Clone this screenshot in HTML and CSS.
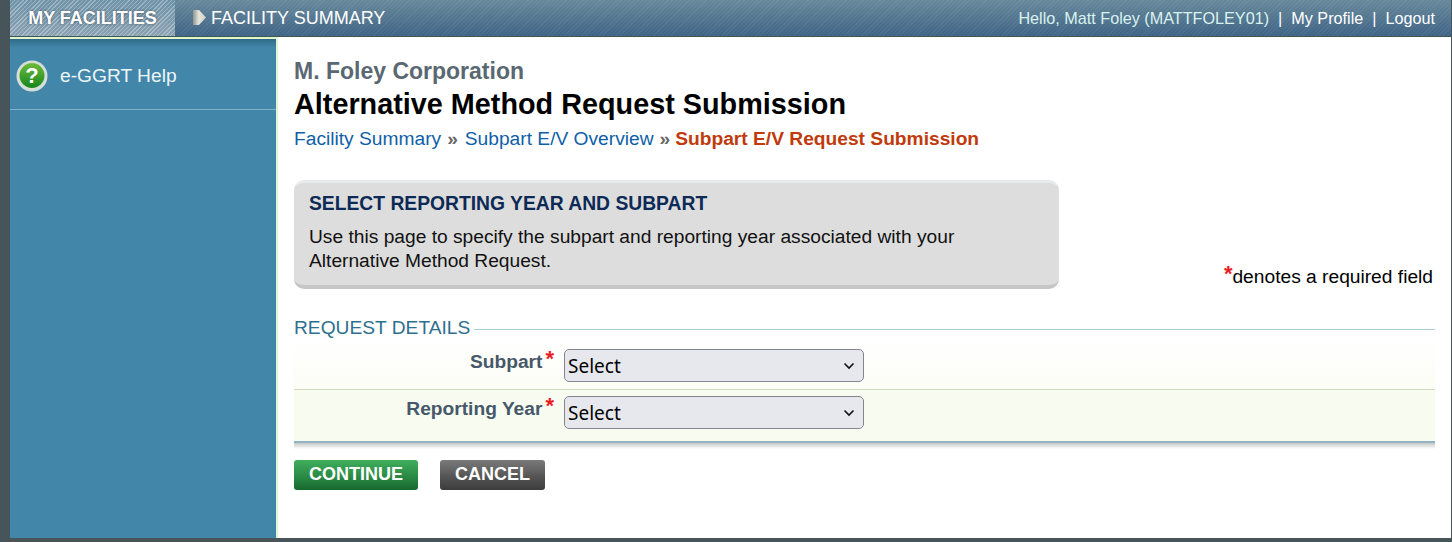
FILE: index.html
```html
<!DOCTYPE html>
<html lang="en">
<head>
<meta charset="UTF-8">
<meta name="viewport" content="width=device-width, initial-scale=1.0">
<title>Alternative Method Request Submission</title>
<link rel="stylesheet" href="styles.css">
</head>
<body>

<div class="wrapper">
    <div class="topbar">
        <a class="tab-active" href="#">MY FACILITIES</a>
        <a class="tab" href="#">
            <svg class="tab-arrow" width="13" height="15" viewBox="0 0 13 15">
                <defs>
                    <linearGradient id="arrowFill" x1="0" y1="0" x2="1" y2="0">
                        <stop offset="0" stop-color="#8f9490"/>
                        <stop offset="0.45" stop-color="#e6e6dc"/>
                        <stop offset="1" stop-color="#cfd0c8"/>
                    </linearGradient>
                </defs>
                <path d="M0 0 L6 0 L13 7.5 L6 15 L0 15 Z" fill="url(#arrowFill)"/>
            </svg>
            FACILITY SUMMARY
        </a>
        <div class="user-links">
            <span class="hello">Hello, Matt Foley (MATTFOLEY01)</span>
            <span class="sep">|</span>
            <a href="#">My Profile</a>
            <span class="sep">|</span>
            <a href="#">Logout</a>
        </div>
    </div>

    <div class="columns">
        <div class="sidebar">
            <a class="help-link" href="#">
                <svg class="help-icon" width="32" height="32" viewBox="0 0 32 32">
                    <defs>
                        <linearGradient id="helpGreen" x1="0" y1="0" x2="0" y2="1">
                            <stop offset="0" stop-color="#6dbb3c"/>
                            <stop offset="1" stop-color="#17851d"/>
                        </linearGradient>
                    </defs>
                    <circle cx="16" cy="16" r="15.5" fill="#d5dfd8"/>
                    <circle cx="16" cy="15.5" r="12.5" fill="url(#helpGreen)"/>
                    <text x="16" y="23" text-anchor="middle" class="help-mark">?</text>
                </svg>
                e-GGRT Help
            </a>
        </div>

        <div class="content">
            <div class="org-name">M. Foley Corporation</div>
            <h1>Alternative Method Request Submission</h1>
            <div class="crumbs">
                <a href="#">Facility Summary</a>
                <span class="crumb-sep">»</span>
                <a href="#">Subpart E/V Overview</a>
                <span class="crumb-sep">»</span>
                <span class="crumb-current">Subpart E/V Request Submission</span>
            </div>

            <div class="info-row">
                <div class="info-box">
                    <h2>SELECT REPORTING YEAR AND SUBPART</h2>
                    <p>Use this page to specify the subpart and reporting year associated with your Alternative Method Request.</p>
                </div>
                <div class="required-note"><span class="star">*</span>denotes a required field</div>
            </div>

            <div class="section-title">
                <span>REQUEST DETAILS</span>
                <div class="section-line"></div>
            </div>

            <div class="form-rows">
                <div class="form-row">
                    <label>Subpart<span class="star">*</span></label>
                    <div class="select-wrap">
                        <select><option>Select</option></select>
                        <svg class="chevron" width="12" height="8" viewBox="0 0 12 8"><path d="M1.5 1.5 L6 6 L10.5 1.5" fill="none" stroke="#111" stroke-width="1.6"/></svg>
                    </div>
                </div>
                <div class="form-row alt">
                    <label>Reporting Year<span class="star">*</span></label>
                    <div class="select-wrap">
                        <select><option>Select</option></select>
                        <svg class="chevron" width="12" height="8" viewBox="0 0 12 8"><path d="M1.5 1.5 L6 6 L10.5 1.5" fill="none" stroke="#111" stroke-width="1.6"/></svg>
                    </div>
                </div>
            </div>
            <div class="form-shadow"></div>

            <div class="buttons">
                <button class="btn btn-green">CONTINUE</button>
                <button class="btn btn-grey">CANCEL</button>
            </div>
        </div>
    </div>
</div>

</body>
</html>
```

FILE: styles.css
```css
html, body {
    height: 100%;
}

body {
    font-family: "Liberation Sans", Arial, sans-serif;
    margin: 0;
    padding: 0;
    background-color: #47545a;
    color: #000;
    overflow: hidden;
}

a {
    text-decoration: none;
}

.wrapper {
    display: flex;
    flex-direction: column;
    height: 538px;
    margin-left: 10px;
    margin-right: 1px;
}

/* top bar */
.topbar {
    display: flex;
    align-items: stretch;
    height: 37px;
    flex: none;
    box-sizing: border-box;
    border-bottom: 1px solid #3c5a50;
    background-color: #3f6486;
    background-image:
        repeating-linear-gradient(135deg, rgba(255,255,255,0.05) 0, rgba(255,255,255,0.05) 1px, transparent 1px, transparent 3px),
        linear-gradient(to bottom, #68899b 0%, #3f6486 100%);
}

.tab-active {
    display: flex;
    align-items: center;
    justify-content: center;
    width: 165px;
    font-size: 18px;
    font-weight: bold;
    color: #fff;
    text-shadow: 0 0 3px rgba(50,70,90,0.9);
    background-color: #8fa5b2;
    background-image:
        repeating-linear-gradient(135deg, rgba(255,255,255,0.3) 0, rgba(255,255,255,0.3) 1px, transparent 1px, transparent 3px),
        linear-gradient(to bottom, #6f93a8 0%, #8aa2b2 100%);
}

.tab {
    display: flex;
    align-items: center;
    margin-left: 18px;
    font-size: 18px;
    color: #fff;
}

.tab-arrow {
    margin-right: 5px;
    margin-top: -2px;
}

.user-links {
    display: flex;
    align-items: center;
    margin-left: auto;
    padding-right: 16px;
    font-size: 16.2px;
    color: #fff;
}

.user-links a {
    color: #fff;
}

.hello {
    color: #d9f2ee;
}

.sep {
    margin: 0 9px;
}

/* left panel + main area */
.columns {
    display: flex;
    flex: 1;
    min-height: 0;
}

.sidebar {
    width: 266px;
    flex: none;
    background: #4287aa;
    border-right: 2px solid #e2f3cf;
    border-top: 2px solid #e2f3cf;
}

.help-link {
    display: flex;
    align-items: center;
    height: 71px;
    box-sizing: border-box;
    padding-left: 6px;
    padding-top: 3px;
    font-size: 19.2px;
    color: #eef6f8;
    border-bottom: 1px solid #7db0c9;
    background: linear-gradient(to bottom, #2f6a87 0, #4287aa 9px);
}

.help-icon {
    margin-right: 12px;
}

.help-mark {
    font-family: "Liberation Sans", Arial, sans-serif;
    font-size: 22px;
    font-weight: bold;
    fill: #fff;
}

.content {
    flex: 1;
    min-width: 0;
    background: #fff;
    padding: 21px 16px 0 16px;
}

.org-name {
    font-size: 23px;
    font-weight: bold;
    line-height: 26px;
    color: #5a6872;
}

h1 {
    margin: 4px 0 0 0;
    font-size: 28.8px;
    line-height: 33px;
    font-weight: bold;
    color: #000;
}

.crumbs {
    margin-top: 7px;
    font-size: 19.2px;
    line-height: 22px;
    display: flex;
    align-items: center;
}

.crumbs a {
    color: #0f5fa8;
}

.crumb-sep {
    margin: 0 6px;
    color: #666;
    font-weight: bold;
}

.crumb-sep + a {
    margin-left: 1px;
}

.crumb-sep + .crumb-current {
    margin-left: -1px;
}

.crumb-current {
    color: #c03a0c;
    font-weight: bold;
}

.info-row {
    display: flex;
    align-items: flex-end;
    justify-content: space-between;
    margin-top: 30px;
}

.info-box {
    width: 765px;
    height: 109px;
    box-sizing: border-box;
    padding: 10px 15px 0 15px;
    background: #dddddd;
    border-radius: 10px;
    border-top: 3px solid #e6ecec;
    border-bottom: 4px solid #c6c6c6;
}

.info-box h2 {
    margin: 0;
    font-size: 19.3px;
    line-height: 22px;
    font-weight: bold;
    color: #0c2a55;
}

.info-box p {
    margin: 10px 0 0 0;
    font-size: 19.2px;
    line-height: 24px;
    color: #111;
}

.required-note {
    font-size: 19.2px;
    margin-bottom: 1px;
    padding-right: 2px;
}

.star {
    color: #ec1c24;
    font-size: 22px;
    font-weight: bold;
    line-height: 10px;
    vertical-align: 2px;
}

.section-title {
    display: flex;
    align-items: center;
    margin-top: 28px;
    font-size: 19.2px;
    line-height: 22px;
    color: #2d6f8e;
}

.section-line {
    flex: 1;
    height: 1px;
    background: #a9d0d8;
    margin-left: 4px;
    margin-top: 2px;
}

.form-rows {
    border-bottom: 2px solid #8fb4c0;
}

.form-shadow {
    height: 6px;
    background: linear-gradient(to bottom, #c4c8c8, #fff);
}

.form-row {
    display: flex;
    height: 50px;
    padding-top: 10px;
    box-sizing: border-box;
    background: linear-gradient(to bottom, #fff, #fcfdf5);
}

.form-row.alt {
    height: 52px;
    border-top: 1px solid #cfdcc4;
    padding-top: 6px;
    background: #f8fcf0;
}

.form-row label {
    width: 260px;
    text-align: right;
    font-size: 19.2px;
    font-weight: bold;
    color: #47586a;
    margin-right: 10px;
    padding-top: 2px;
}

.form-row label .star {
    margin-left: 3px;
}

.select-wrap {
    position: relative;
    width: 300px;
    height: 33px;
}

.select-wrap select {
    appearance: none;
    display: block;
    width: 100%;
    height: 100%;
    box-sizing: border-box;
    padding: 0 0 0 3px;
    font-family: "Noto Sans", "Open Sans", sans-serif;
    font-size: 19px;
    color: #000;
    background-color: #e7e8ed;
    border: 1px solid #85858f;
    border-radius: 5px;
}

.chevron {
    position: absolute;
    right: 9px;
    top: 13px;
    pointer-events: none;
}

.buttons {
    display: flex;
    gap: 22px;
    margin-top: 11px;
}

.btn {
    height: 30px;
    border: none;
    border-radius: 3px;
    padding: 0 15px 2px 15px;
    font-family: "Liberation Sans", Arial, sans-serif;
    font-size: 18px;
    font-weight: bold;
    color: #fff;
}

.btn-green {
    width: 124px;
    background: linear-gradient(to bottom, #3fae5c 0%, #2a8a45 55%, #17692d 100%);
}

.btn-grey {
    width: 105px;
    background: linear-gradient(to bottom, #7a7a7a 0%, #555 55%, #3c3c3c 100%);
}
```
